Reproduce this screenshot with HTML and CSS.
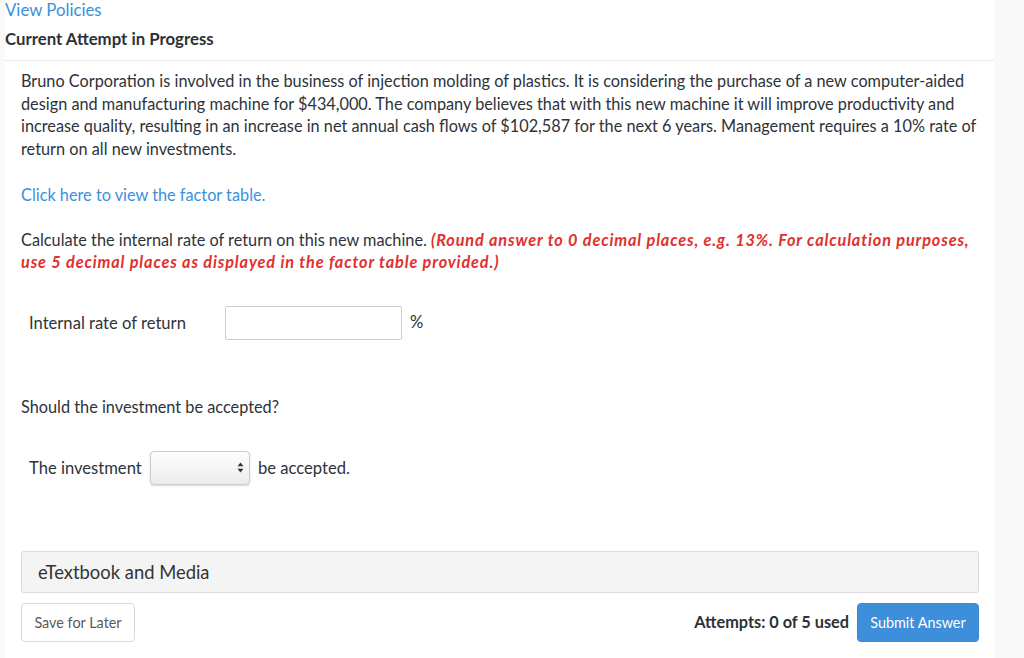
FILE: index.html
```html
<!DOCTYPE html>
<html>
<head>
<meta charset="utf-8">
<link rel="stylesheet" href="styles.css">
</head>
<body>
<div class="page">
  <main class="main">
    <header class="top">
      <a class="link policies" href="#">View Policies</a>
      <h2 class="attempt">Current Attempt in Progress</h2>
    </header>
    <section class="question">
      <p class="para">Bruno Corporation is involved in the business of injection molding of plastics. It is considering the purchase of a new <span class="nowrap">computer-aided</span> design and manufacturing machine for $434,000. The company believes that with this new machine it will improve productivity and increase quality, resulting in an increase in net annual cash flows of $102,587 for the next 6 years. Management requires a 10% rate of return on all new investments.</p>
      <p class="para factor"><a class="link" href="#">Click here to view the factor table.</a></p>
      <p class="para calc">Calculate the internal rate of return on this new machine. <em class="warn">(Round answer to 0 decimal places, e.g. 13%. For calculation purposes, use 5 decimal places as displayed in the factor table provided.)</em></p>
      <div class="row irr">
        <span class="label">Internal rate of return</span>
        <span class="input"></span>
        <span class="unit">%</span>
      </div>
      <p class="para should">Should the investment be accepted?</p>
      <div class="row inv">
        <span class="label2">The investment</span>
        <span class="select"><svg class="arrows" width="7" height="11" viewBox="0 0 7 11"><path d="M3.5 0.5 L6.5 4.2 L0.5 4.2 Z M3.5 10.5 L6.5 6.8 L0.5 6.8 Z" fill="#333"/></svg></span>
        <span class="after">be accepted.</span>
      </div>
      <div class="panel">eTextbook and Media</div>
      <div class="actions">
        <button class="btn save">Save for Later</button>
        <div class="right">
          <span class="attempts">Attempts: 0 of 5 used</span>
          <button class="btn submit">Submit Answer</button>
        </div>
      </div>
    </section>
  </main>
  <aside class="side"></aside>
</div>
</body>
</html>
```
FILE: styles.css
```css
* { box-sizing: border-box; }
html, body { margin: 0; padding: 0; }
body {
  font-family: Lato, "Liberation Sans", sans-serif;
  font-size: 16.3px;
  color: #2d3339;
  background: #f9f9fa;
  width: 1024px;
  height: 658px;
  overflow: hidden;
}
.page { display: flex; height: 658px; }
.main {
  width: 989px;
  margin-left: 5px;
  background: #fff;
  height: 658px;
}
.side { flex: 1; background: #f9f9fa; }
.top {
  border-bottom: 1px solid #e8e8e8;
  height: 61px;
}
.link { color: #3b8fdd; text-decoration: none; }
.policies { display: block; font-size: 16.8px; line-height: 20px; margin-left: 0; }
.attempt {
  margin: 8px 0 0 0;
  font-size: 16.8px;
  font-weight: 700;
  line-height: 22px;
  color: #2b3137;
}
.question { padding: 9px 16px 0 16px; }
.para { margin: 0; line-height: 22.7px; }
.nowrap { white-space: nowrap; }
.factor { margin-top: 23px; }
.calc { margin-top: 22px; }
.warn { color: #e2302d; font-weight: 700; font-style: italic; letter-spacing: 0.85px; }
.row { display: flex; align-items: center; }
.irr { margin-top: 32px; padding-left: 8px; height: 34px; font-size: 16.6px; }
.label { width: 196px; }
.input {
  display: block;
  width: 177px;
  height: 34px;
  border: 1px solid #ccc;
  border-radius: 2px;
  background: #fff;
}
.unit { margin-left: 8px; margin-top: -2px; }
.should { margin-top: 56px; }
.inv { margin-top: 32px; padding-left: 8px; height: 34px; font-size: 16.6px; }
.label2 { width: 121px; }
.select {
  display: flex;
  align-items: center;
  justify-content: flex-end;
  width: 100px;
  height: 34px;
  border: 1px solid #ccc;
  border-radius: 4px;
  background: linear-gradient(#fdfdfd, #ececec);
  box-shadow: 0 1px 2px rgba(0,0,0,0.15);
  padding-right: 5px;
}
.after { margin-left: 8px; }
.panel {
  margin-top: 66px;
  height: 42px;
  border: 1px solid #dcdcdc;
  border-radius: 3px;
  background: #f4f4f4;
  font-size: 18.4px;
  line-height: 40px;
  padding-left: 16px;
  color: #333;
  width: 958px;
}
.actions {
  margin-top: 10px;
  display: flex;
  justify-content: space-between;
  align-items: center;
  width: 958px;
}
.btn {
  font-family: Lato, "Liberation Sans", sans-serif;
  font-size: 14.4px;
  height: 39px;
  border-radius: 4px;
  cursor: pointer;
}
.save {
  width: 114px;
  background: #fff;
  border: 1px solid #d8d8d8;
  color: #5a5a5a;
}
.right { display: flex; align-items: center; }
.attempts { font-weight: 700; font-size: 16.3px; margin-right: 8px; color: #2b3137; margin-top: -2px; }
.submit {
  width: 122px;
  background: #3d8edb;
  border: 1px solid #3a88d4;
  color: #fff;
}
```
